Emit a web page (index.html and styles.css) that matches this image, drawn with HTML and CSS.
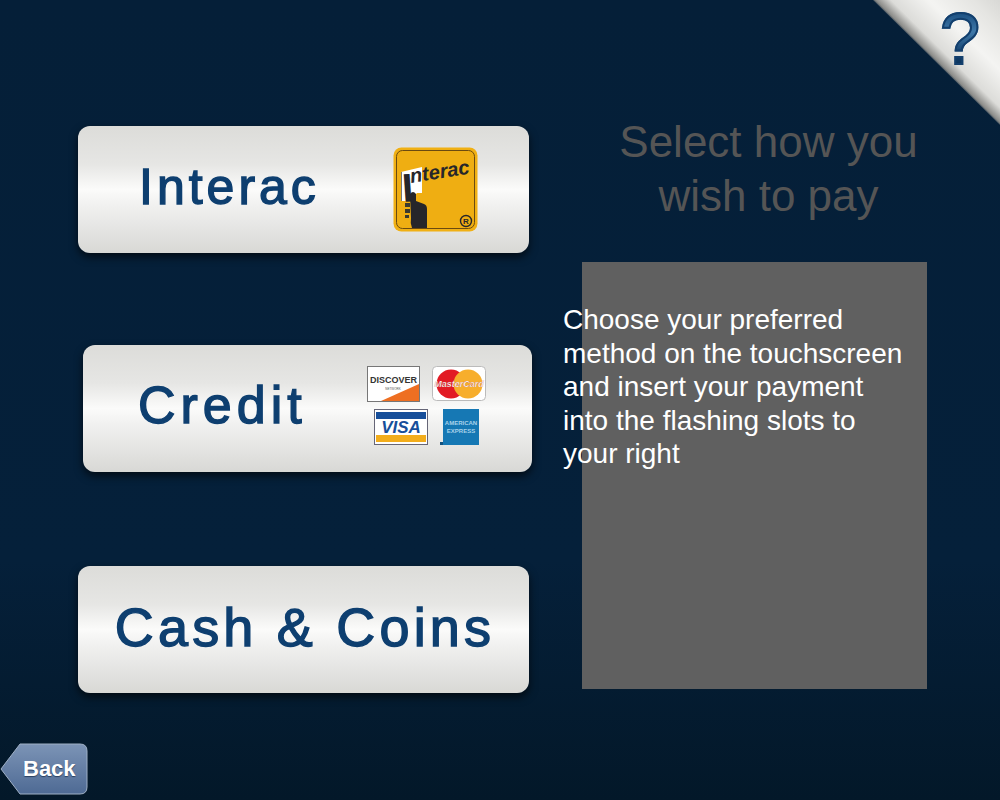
FILE: index.html
```html
<!DOCTYPE html>
<html lang="en">
<head>
  <meta charset="UTF-8" />
  <title>Select how you wish to pay</title>
  <link rel="stylesheet" href="styles.css">
</head>
<body>
  <div class="screen">
    <div class="pay-options">
      <button class="pay-btn interac-btn">
        <span class="pay-label">Interac</span>
        <svg class="interac-logo" width="85" height="85" viewBox="0 0 85 85">
          <rect x="0.5" y="0.5" width="84" height="84" rx="8" fill="#f0b014"/>
          <rect x="3.5" y="3.5" width="78" height="78" rx="6" fill="#efae12" stroke="#6b4a10" stroke-width="1"/>
          <polygon points="8,25 29,20 29,46 24,46 17,54 8,54" fill="#fff"/>
          <rect x="8" y="25" width="1" height="29" fill="#777"/>
          <text class="logo-i" x="10" y="55" transform="rotate(-4 10 55)">I</text>
          <text class="logo-text" x="18" y="36" transform="rotate(-9 18 36)">nterac</text>
          <path d="M17 47 q3 -4 6 0 v7 l8 3 q3 1 3 5 v19 h-15 q-2 -5 -1 -10 z" fill="#26262a"/>
          <rect x="12" y="56" width="5" height="4" fill="#3a3a30"/>
          <rect x="12" y="62" width="5" height="4" fill="#3a3a30"/>
          <rect x="12" y="68" width="4" height="3" fill="#3a3a30"/>
          <circle cx="73" cy="74" r="5.5" fill="none" stroke="#26262a" stroke-width="1.4"/>
          <text class="logo-reg" x="73" y="77">R</text>
        </svg>
      </button>

      <button class="pay-btn credit-btn">
        <span class="pay-label">Credit</span>
        <span class="card-logos">
          <span class="card-row">
            <svg width="53" height="36" viewBox="0 0 53 36">
              <rect x="0.5" y="0.5" width="52" height="35" fill="#fff" stroke="#777"/>
              <polygon points="14,35 52,35 52,18" fill="#ee6f22"/>
              <text class="discover-text" x="3" y="17">DISCOVER</text>
              <text class="discover-sub" x="26" y="24">NETWORK</text>
            </svg>
            <svg width="54" height="36" viewBox="0 0 54 36">
              <rect x="0.5" y="0.5" width="53" height="34" rx="4" fill="#fff" stroke="#bbb"/>
              <circle cx="19" cy="18" r="14.5" fill="#e21b24"/>
              <circle cx="36" cy="18" r="14.5" fill="#f7ae2c"/>
              <text class="mc-text" x="27" y="21">MasterCard</text>
            </svg>
          </span>
          <span class="card-row">
            <svg width="54" height="36" viewBox="0 0 54 36">
              <rect x="0.5" y="0.5" width="53" height="35" fill="#fff" stroke="#667"/>
              <rect x="2" y="3" width="50" height="7" fill="#174f9a"/>
              <rect x="2" y="26" width="50" height="7" fill="#f2ad1c"/>
              <text class="visa-text" x="27" y="24">VISA</text>
            </svg>
            <svg width="40" height="36" viewBox="0 0 40 36">
              <rect x="3" y="0" width="36" height="36" fill="#1678b4"/>
              <rect x="0" y="33" width="3" height="3" fill="#14527e"/>
              <text class="amex-text" x="21" y="16">AMERICAN</text>
              <text class="amex-text" x="21" y="24">EXPRESS</text>
            </svg>
          </span>
        </span>
      </button>

      <button class="pay-btn cash-btn">
        <span class="pay-label">Cash &amp; Coins</span>
      </button>
    </div>

    <div class="info-col">
      <h1 class="info-title">Select how you<br>wish to pay</h1>
      <div class="info-panel">
        <p class="info-text">Choose your preferred method on the touchscreen and insert your payment into the flashing slots to your right</p>
      </div>
    </div>

    <a class="help-corner" href="#"><span class="help-mark">?</span></a>

    <a class="back-btn" href="#">
      <svg class="back-shape" width="88" height="52" viewBox="0 0 88 52">
        <defs>
          <linearGradient id="backFill" x1="0" y1="0" x2="0" y2="1">
            <stop offset="0" stop-color="#7c94b6"/>
            <stop offset="1" stop-color="#4e6a94"/>
          </linearGradient>
        </defs>
        <path d="M1 26 L20 1 H80 Q87 1 87 8 V44 Q87 51 80 51 H20 Z" fill="url(#backFill)" stroke="#9fb0c6" stroke-width="1"/>
      </svg>
      <span class="back-label">Back</span>
    </a>
  </div>
</body>
</html>
```

FILE: styles.css
```css
* {
  box-sizing: border-box;
}

body {
  margin: 0;
  padding: 0;
  background: #041e37;
  font-family: "Liberation Sans", Arial, sans-serif;
}

.screen {
  position: relative;
  width: 1000px;
  height: 800px;
  overflow: hidden;
  display: flex;
  background: linear-gradient(180deg, #051f38 0%, #05203a 70%, #031829 100%);
}

/* left column */
.pay-options {
  width: 582px;
  padding: 126px 0 0 78px;
  display: flex;
  flex-direction: column;
  gap: 92px;
}

.pay-btn {
  width: 451px;
  height: 127px;
  padding: 0;
  border: none;
  border-radius: 12px;
  display: flex;
  align-items: center;
  font-family: inherit;
  background: linear-gradient(180deg, #dcdcd9 0%, #e6e6e4 30%, #fbfbfa 50%, #f1f1f0 62%, #e2e2e0 85%, #d8d8d5 100%);
  box-shadow: 0 4px 8px rgba(0, 0, 0, 0.65);
}

.pay-label {
  position: relative;
  top: -3px;
  font-size: 50px;
  font-weight: 400;
  color: #0e3f70;
  letter-spacing: 4px;
  -webkit-text-stroke: 1.4px #0e3f70;
}

.interac-btn {
  padding: 0 0 0 61px;
}

.interac-logo {
  margin-left: 73px;
}

.credit-btn {
  width: 449px;
  margin-left: 5px;
  padding-left: 55px;
}

.credit-btn .pay-label {
  top: -4px;
  font-size: 52px;
  letter-spacing: 5px;
}

.cash-btn {
  justify-content: center;
  margin-top: 2px;
}

.cash-btn .pay-label {
  margin-left: 3px;
  font-size: 54px;
  letter-spacing: 4.2px;
}

/* card logos */
.card-logos {
  margin-left: 60px;
  margin-top: -6px;
  display: flex;
  flex-direction: column;
  align-items: center;
  gap: 7px;
  width: 120px;
}

.card-row {
  display: flex;
  gap: 12px;
  height: 36px;
}

.card-row svg {
  display: block;
}

.logo-i {
  font: 700 40px "Liberation Sans", sans-serif;
  fill: #26262a;
}

.logo-text {
  font: italic 700 20px "Liberation Sans", sans-serif;
  fill: #26262a;
}

.logo-reg {
  font: 700 8px "Liberation Sans", sans-serif;
  fill: #26262a;
  text-anchor: middle;
}

.discover-text {
  font: 700 9px "Liberation Sans", sans-serif;
  fill: #333;
}

.discover-sub {
  font: 400 3px "Liberation Sans", sans-serif;
  fill: #555;
  text-anchor: middle;
}

.mc-text {
  font: italic 700 9px "Liberation Sans", sans-serif;
  fill: #fff;
  stroke: #b3362f;
  stroke-width: 0.2px;
  text-anchor: middle;
}

.visa-text {
  font: italic 700 17px "Liberation Sans", sans-serif;
  fill: #174f9a;
  text-anchor: middle;
}

.amex-text {
  font: 700 6px "Liberation Sans", sans-serif;
  fill: #a9d2ea;
  text-anchor: middle;
}

/* right column */
.info-col {
  width: 345px;
  padding-top: 115px;
}

.info-title {
  margin: 0 0 39px;
  width: 373px;
  font-size: 44px;
  font-weight: 400;
  line-height: 54px;
  text-align: center;
  color: #555;
}

.info-panel {
  width: 345px;
  height: 427px;
  padding-top: 41px;
  background: #606060;
}

.info-text {
  margin: 0 0 0 -19px;
  width: 345px;
  font-size: 28px;
  line-height: 33.5px;
  color: #fff;
}

/* overlays */
.help-corner {
  position: absolute;
  top: 0;
  right: 0;
  width: 127px;
  height: 125px;
  text-decoration: none;
}

.help-corner::before {
  content: "";
  position: absolute;
  inset: 0;
  clip-path: polygon(0 0, 100% 0, 100% 100%);
  background: linear-gradient(to top right, #05203a 49%, #8b8b88 51%, #dcdcd9 57%, #f4f4f2 72%, #e4e4e1 90%, #d8d8d5 100%);
}

.help-mark {
  position: absolute;
  top: 3px;
  left: 67px;
  font-size: 72px;
  font-weight: 400;
  line-height: 72px;
  background: linear-gradient(180deg, #174a7c 10%, #3f78a8 40%, #123f6c 70%, #0c3158 90%);
  -webkit-background-clip: text;
  background-clip: text;
  color: transparent;
  -webkit-text-stroke: 2px #133f6d;
}

.back-btn {
  position: absolute;
  left: 0;
  bottom: 5px;
  width: 88px;
  height: 52px;
  text-decoration: none;
}

.back-shape {
  display: block;
}

.back-label {
  position: absolute;
  left: 23px;
  top: 13px;
  font-size: 22px;
  font-weight: 700;
  color: #fff;
  text-shadow: 0 1px 1px #2a3f5f;
}
```
